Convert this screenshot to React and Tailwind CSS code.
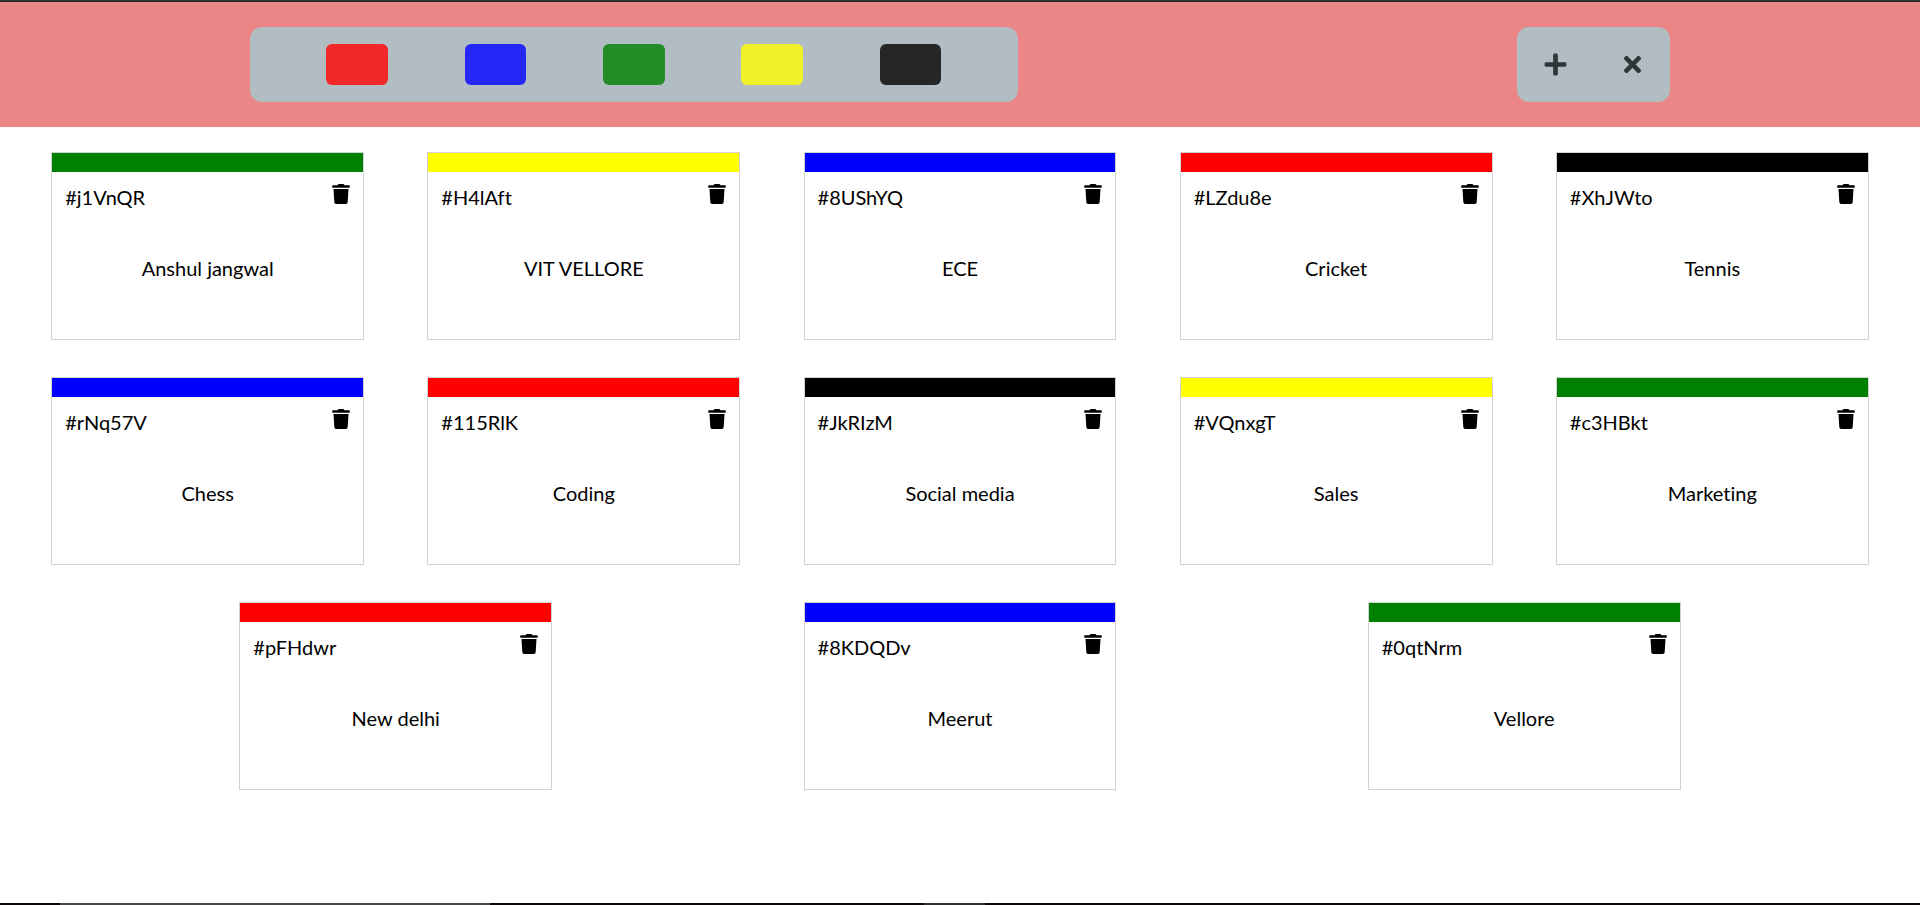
import { FaTrash, FaPlus, FaTimes } from "react-icons/fa";

const COLORS = {
  red: "bg-[#ff0000]",
  blue: "bg-[#0000ff]",
  green: "bg-[#008000]",
  yellow: "bg-[#ffff00]",
  black: "bg-black",
};

const FILTERS = [
  ["red", "bg-[#f22727]"],
  ["blue", "bg-[#2427f5]"],
  ["green", "bg-[#248d27]"],
  ["yellow", "bg-[#f0f127]"],
  ["black", "bg-[#242628]"],
];

const ROWS = [
  [
    ["j1VnQR", "Anshul jangwal", "green"],
    ["H4lAft", "VIT VELLORE", "yellow"],
    ["8UShYQ", "ECE", "blue"],
    ["LZdu8e", "Cricket", "red"],
    ["XhJWto", "Tennis", "black"],
  ],
  [
    ["rNq57V", "Chess", "blue"],
    ["115RlK", "Coding", "red"],
    ["JkRIzM", "Social media", "black"],
    ["VQnxgT", "Sales", "yellow"],
    ["c3HBkt", "Marketing", "green"],
  ],
  [
    ["pFHdwr", "New delhi", "red"],
    ["8KDQDv", "Meerut", "blue"],
    ["0qtNrm", "Vellore", "green"],
  ],
];

function Toolbar() {
  return (
    <header className="flex h-[125px] items-center justify-between bg-[#eb8686] px-[13%]">
      <div className="flex h-[75px] w-[54.1%] items-center justify-evenly rounded-xl bg-[#b2bdc3]">
        {FILTERS.map(([name, color]) => (
          <button key={name} aria-label={name} className={`h-[41px] w-[8%] rounded-md ${color}`} />
        ))}
      </div>
      <div className="flex h-[75px] w-[153px] items-center justify-around rounded-xl bg-[#b2bdc3] text-[25px] text-[#2d3639]">
        <button aria-label="Add ticket">
          <FaPlus />
        </button>
        <button aria-label="Remove tickets">
          <FaTimes />
        </button>
      </div>
    </header>
  );
}

function Ticket({ id, task, color }) {
  return (
    <article className="mx-3 h-[188px] w-[16.3%] border border-[#d3d3d3] text-[20px] leading-[26px] text-black">
      <div className={`h-[19px] ${COLORS[color]}`} />
      <div className="flex items-start justify-between pt-3 pr-3 pl-[13px]">
        <span>#{id}</span>
        <button aria-label={`Delete ${task}`}>
          <FaTrash />
        </button>
      </div>
      <p className="pt-[45px] text-center">{task}</p>
    </article>
  );
}

export default function App() {
  return (
    <div className="flex min-h-screen flex-col bg-white font-['Lato',sans-serif] [font-variant-ligatures:none]">
      <div className="h-0.5 border-t border-[#383434] bg-[#26221f]" />
      <Toolbar />
      <main className="flex flex-1 flex-col gap-[37px] py-[25px]">
        {ROWS.map((row) => (
          <div key={row[0][0]} className="flex flex-wrap justify-evenly">
            {row.map(([id, task, color]) => (
              <Ticket key={id} id={id} task={task} color={color} />
            ))}
          </div>
        ))}
      </main>
      <div className="flex h-0.5 bg-[#0c080b]">
        <div className="ml-[60px] w-[430px] bg-[#4a4747]" />
        <div className="ml-[434px] w-[61px] bg-[#302e2e]" />
      </div>
    </div>
  );
}
